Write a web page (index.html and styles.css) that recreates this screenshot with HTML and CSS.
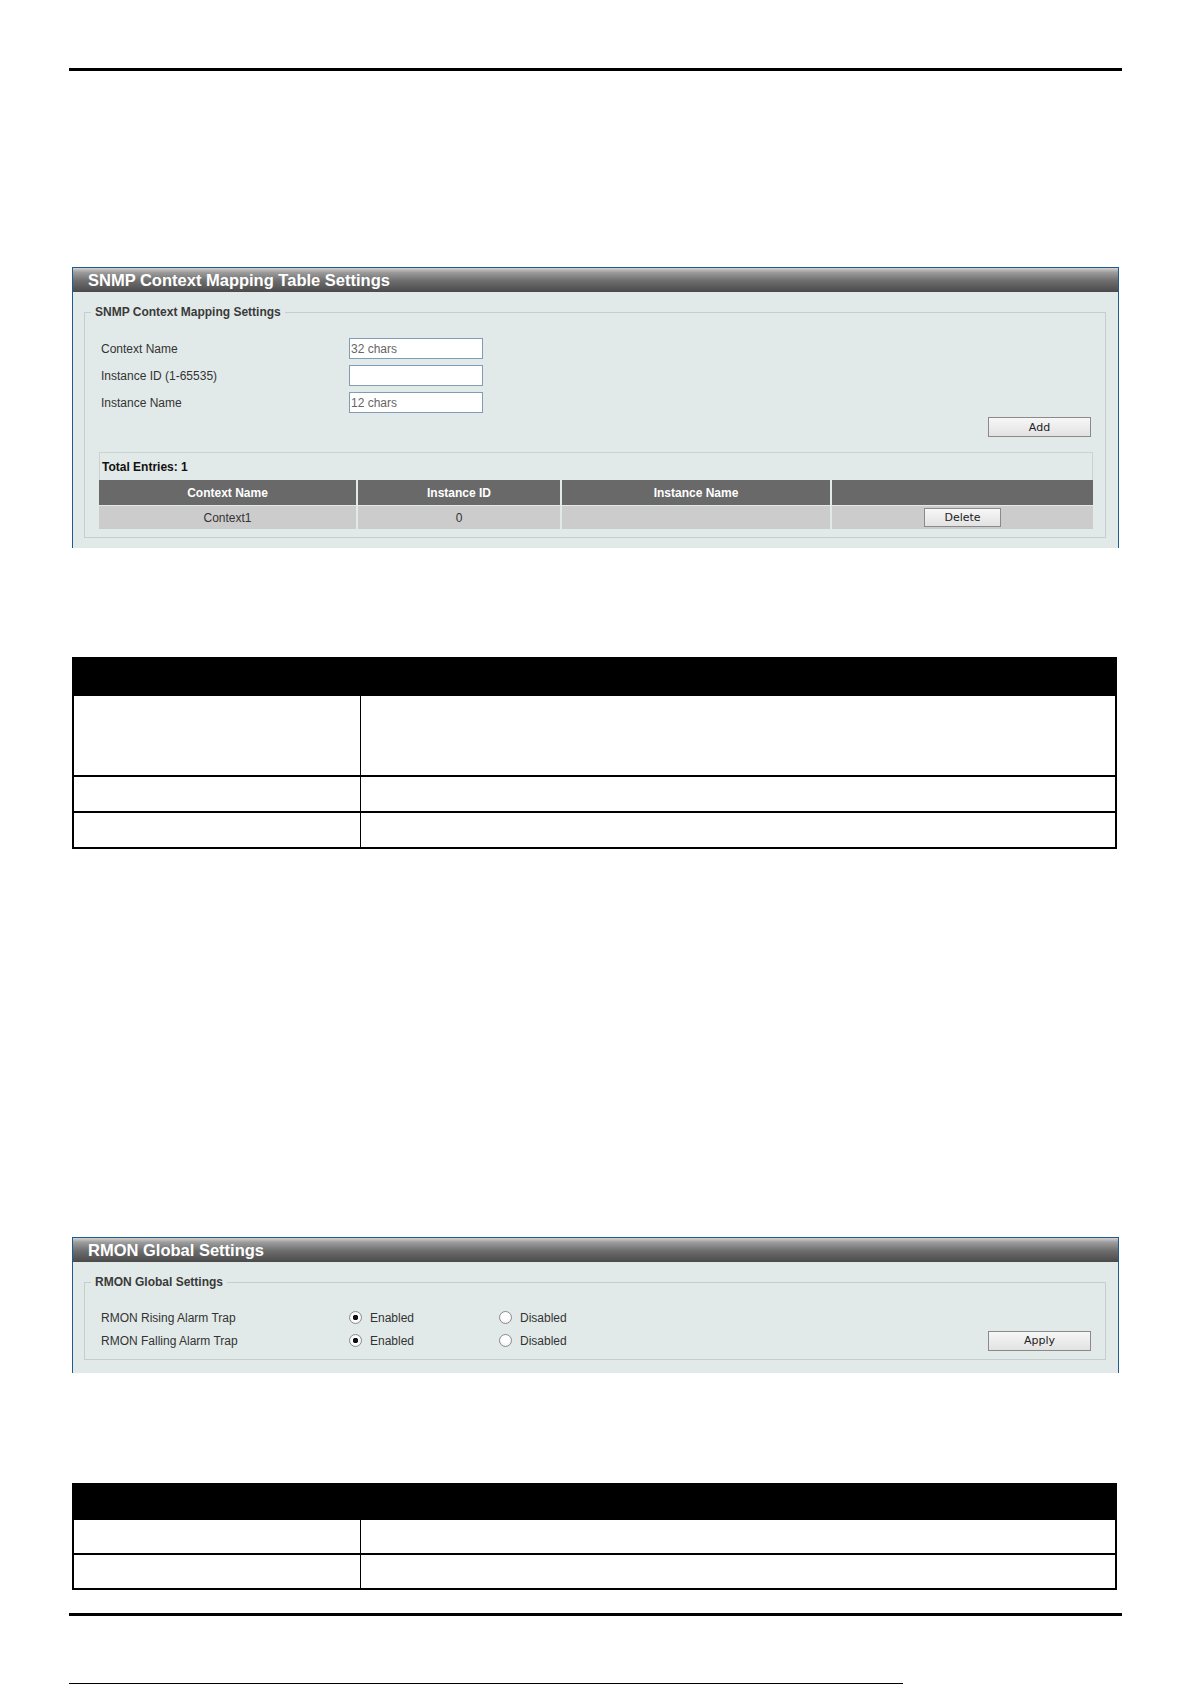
FILE: index.html
```html
<!DOCTYPE html>
<html lang="en">
<head>
    <meta charset="UTF-8">
    <meta name="viewport" content="width=device-width, initial-scale=1.0">
    <title>SNMP Context Mapping / RMON Global Settings</title>
    <link rel="stylesheet" href="styles.css">
</head>
<body>
    <div class="page">
        <div class="rule"></div>

        <!-- SNMP context mapping -->
        <div class="panel panel-snmp">
            <div class="panel-title">SNMP Context Mapping Table Settings</div>
            <fieldset class="group">
                <legend>SNMP Context Mapping Settings</legend>
                <div class="fields">
                    <div class="field">
                        <label for="ctx_name">Context Name</label>
                        <input type="text" id="ctx_name" placeholder="32 chars">
                    </div>
                    <div class="field">
                        <label for="inst_id">Instance ID (1-65535)</label>
                        <input type="text" id="inst_id">
                    </div>
                    <div class="field">
                        <label for="inst_name">Instance Name</label>
                        <input type="text" id="inst_name" placeholder="12 chars">
                    </div>
                    <div class="actions">
                        <button type="button" class="btn">Add</button>
                    </div>

                    <div class="entries">
                        <div class="entries-total">Total Entries: 1</div>
                        <table class="grid">
                            <thead>
                                <tr>
                                    <th class="c1">Context Name</th>
                                    <th class="c2">Instance ID</th>
                                    <th class="c3">Instance Name</th>
                                    <th class="c4"></th>
                                </tr>
                            </thead>
                            <tbody>
                                <tr>
                                    <td>Context1</td>
                                    <td>0</td>
                                    <td></td>
                                    <td><button type="button" class="btn btn-small">Delete</button></td>
                                </tr>
                            </tbody>
                        </table>
                    </div>
                </div>
            </fieldset>
        </div>

        <table class="desc desc-one">
            <thead>
                <tr><th class="d1"></th><th></th></tr>
            </thead>
            <tbody>
                <tr class="tall"><td class="d1"></td><td></td></tr>
                <tr><td class="d1"></td><td></td></tr>
                <tr><td class="d1"></td><td></td></tr>
            </tbody>
        </table>

        <!-- RMON -->
        <div class="panel panel-rmon">
            <div class="panel-title">RMON Global Settings</div>
            <fieldset class="group">
                <legend>RMON Global Settings</legend>
                <div class="fields fields-radio">
                    <div class="field field-radio">
                        <span class="label">RMON Rising Alarm Trap</span>
                        <label class="opt"><input type="radio" name="rising" checked> Enabled</label>
                        <label class="opt"><input type="radio" name="rising"> Disabled</label>
                    </div>
                    <div class="field field-radio">
                        <span class="label">RMON Falling Alarm Trap</span>
                        <label class="opt"><input type="radio" name="falling" checked> Enabled</label>
                        <label class="opt"><input type="radio" name="falling"> Disabled</label>
                        <button type="button" class="btn btn-apply">Apply</button>
                    </div>
                </div>
            </fieldset>
        </div>

        <table class="desc desc-two">
            <thead>
                <tr><th class="d1"></th><th></th></tr>
            </thead>
            <tbody>
                <tr><td class="d1"></td><td></td></tr>
                <tr><td class="d1"></td><td></td></tr>
            </tbody>
        </table>

        <div class="rule rule-bottom"></div>
        <div class="edge"></div>
    </div>
</body>
</html>
```

FILE: styles.css
```css
body {
    margin: 0;
    padding: 0;
    background: #fff;
    font-family: "Liberation Sans", Arial, sans-serif;
    font-size: 12px;
    color: #333;
}

.page {
    width: 1053px;
    margin-left: 69px;
    padding-top: 68px;
}

.rule {
    height: 3px;
    background: #000;
}

/* settings panels */
.panel {
    margin: 0 3px;
    border: 1px solid #1f5b8f;
    border-bottom: none;
    background: #e2eae9;
}

.panel-snmp {
    margin-top: 196px;
    padding-bottom: 10px;
}

.panel-rmon {
    margin-top: 388px;
    padding-bottom: 13px;
}

.panel-title {
    height: 24px;
    line-height: 25px;
    padding-left: 15px;
    color: #fff;
    font-size: 16.5px;
    font-weight: bold;
    background: linear-gradient(#d2d2d2 0%, #9c9c9c 18%, #6c6c6c 55%, #4a4a4a 100%);
}

.group {
    margin: 13px 12px 0 11px;
    padding: 0;
    border: 1px solid #c4cfcd;
    min-width: 0;
}

.group legend {
    margin-left: 6px;
    padding: 0 4px;
    font-weight: bold;
    color: #3a3a3a;
    line-height: 14px;
}

.fields {
    padding: 16px 12px 8px 16px;
}

.field {
    display: flex;
    align-items: center;
    height: 27px;
}

.field > label,
.field > .label {
    width: 248px;
    flex-shrink: 0;
}

.field input[type="text"] {
    box-sizing: border-box;
    width: 134px;
    height: 21px;
    margin: 0;
    padding: 0 1px;
    border: 1px solid #7f9db9;
    background: #fff;
    font-family: "Liberation Sans", Arial, sans-serif;
    font-size: 12px;
    color: #555;
}

.field input::placeholder {
    color: #666;
}

.actions {
    display: flex;
    justify-content: flex-end;
    padding: 1px 2px 0 0;
}

.btn {
    box-sizing: border-box;
    width: 103px;
    height: 20px;
    margin: 0;
    padding: 0;
    border: 1px solid #8a8a8a;
    background: linear-gradient(#f7f7f7, #e2e2e2);
    font-family: "DejaVu Sans", Tahoma, sans-serif;
    font-size: 11px;
    color: #222;
}

.btn-small {
    width: 77px;
    height: 19px;
}

/* entries grid */
.entries {
    margin: 15px 0 0 -2px;
}

.entries-total {
    height: 27px;
    line-height: 28px;
    padding-left: 2px;
    border: 1px solid #cbd3d1;
    border-bottom: none;
    font-weight: bold;
    color: #111;
}

.grid {
    width: 100%;
    border-collapse: collapse;
    table-layout: fixed;
}

.grid th,
.grid td {
    padding: 0;
    text-align: center;
    border-left: 2px solid #e2eae9;
}

.grid th:first-child,
.grid td:first-child {
    border-left: none;
}

.grid th {
    height: 25px;
    background: #696969;
    color: #fff;
    font-weight: bold;
    border-bottom: 1px solid #e2eae9;
}

.grid td {
    height: 23px;
    background: #cccccc;
    color: #333;
}

.grid .c1 { width: 257px; }
.grid .c2 { width: 202px; }
.grid .c3 { width: 268px; }

/* radio rows */
.fields-radio {
    padding-top: 17px;
    padding-bottom: 7px;
    padding-right: 14px;
}

.field-radio {
    height: 23px;
}

.field .opt {
    display: flex;
    align-items: center;
    width: 150px;
    flex-shrink: 0;
}

.opt input {
    appearance: none;
    -webkit-appearance: none;
    box-sizing: border-box;
    width: 13px;
    height: 13px;
    margin: 0 8px 0 0;
    border: 1px solid #8b8b8b;
    border-radius: 50%;
    background: radial-gradient(circle at 50% 35%, #fff 40%, #e6e6e6 100%);
}

.opt input:checked {
    background: radial-gradient(circle, #111 0, #111 2.5px, #fff 3px, #ececec 100%);
}

.btn-apply {
    margin-left: auto;
}

/* description tables */
.desc {
    width: 1045px;
    margin-left: 3px;
    border-collapse: collapse;
    border: 2px solid #000;
}

.desc-one {
    margin-top: 109px;
}

.desc-two {
    margin-top: 110px;
}

.desc th {
    height: 35px;
    padding: 0;
    background: #000;
}

.desc td {
    height: 34px;
    padding: 0;
    border-top: 2px solid #000;
}

.desc-two th,
.desc-two td {
    height: 33px;
}

.desc .d1 {
    width: 286px;
    border-right: 1px solid #000;
}

.desc th.d1 {
    border-right: none;
}

.desc tr.tall td {
    height: 79px;
}

.rule-bottom {
    margin-top: 23px;
}

.edge {
    width: 834px;
    height: 1px;
    margin-top: 67px;
    background: #000;
}
```
